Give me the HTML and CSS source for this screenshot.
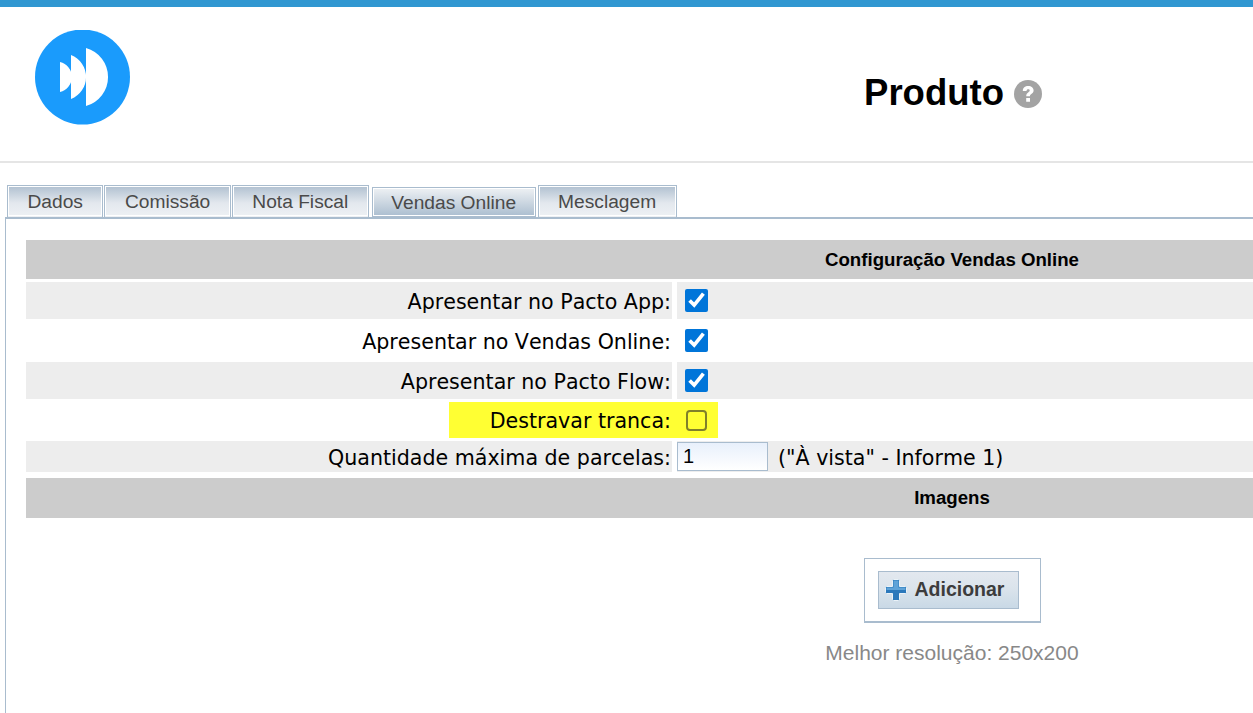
FILE: index.html
```html
<!DOCTYPE html>
<html lang="pt-BR">
<head>
<meta charset="utf-8">
<title>Produto</title>
<link rel="stylesheet" href="styles.css">
</head>
<body>
<div class="page">
  <header class="header">
    <svg class="logo" viewBox="0 0 95 95" width="95" height="95" aria-hidden="true">
      <circle cx="47.5" cy="47" r="47.5" fill="#1a9bfc"/>
      <path d="M25 32 A15.400 15.400 0 0 1 25 62 Z M36 25 A23.600 23.600 0 0 1 36 69 Z M51 18 A30.100 30.100 0 0 1 51 76 Z" fill="#fff"/>
    </svg>
    <div class="title">
      <h1>Produto</h1>
      <svg class="help" viewBox="0 0 28 28" width="28" height="28" aria-hidden="true">
        <circle cx="14" cy="14" r="14" fill="#a3a3a3"/>
        <path d="M8.800 11 C8.800 7.800 11 6 14.200 6 C17.400 6 19.600 7.900 19.600 10.500 C19.600 12.500 18.400 13.400 17 14.300 C16.200 14.800 16 15.300 16 16.200 H12.200 C12.200 14.300 12.800 13.300 14.200 12.400 C15.300 11.700 15.700 11.300 15.700 10.600 C15.700 9.800 15.100 9.300 14.200 9.300 C13.200 9.300 12.600 9.900 12.500 11 Z M12.200 18 H16 V21.800 H12.200 Z" fill="#fff"/>
      </svg>
    </div>
  </header>
  <nav class="tabs">
    <a class="tab">Dados</a>
    <a class="tab">Comissão</a>
    <a class="tab">Nota Fiscal</a>
    <a class="tab tab-active">Vendas Online</a>
    <a class="tab">Mesclagem</a>
  </nav>
  <main class="panel">
    <div class="section-head head-first">Configuração Vendas Online</div>
    <div class="form-row row-odd">
      <label class="row-label">Apresentar no Pacto App:</label>
      <div class="row-field"><input class="check" type="checkbox" checked></div>
    </div>
    <div class="form-row">
      <label class="row-label">Apresentar no Vendas Online:</label>
      <div class="row-field"><input class="check" type="checkbox" checked></div>
    </div>
    <div class="form-row row-odd">
      <label class="row-label">Apresentar no Pacto Flow:</label>
      <div class="row-field"><input class="check" type="checkbox" checked></div>
    </div>
    <div class="form-row row-mark">
      <div class="row-label"><span class="mark-left">Destravar tranca:</span></div>
      <div class="row-field"><span class="mark-right"><input class="check-plain" type="checkbox"></span></div>
    </div>
    <div class="form-row row-odd row-short">
      <label class="row-label">Quantidade máxima de parcelas:</label>
      <div class="row-field row-input">
        <input class="qty" type="text" value="1">
        <span class="qty-note">("À vista" - Informe 1)</span>
      </div>
    </div>
    <div class="section-head head-images">Imagens</div>
    <div class="upload">
      <div class="upload-box">
        <button class="add-btn" type="button">
          <svg class="plus" viewBox="0 0 24 24" width="24" height="24" aria-hidden="true">
            <path d="M8.500 2.500 Q8.500 1.500 9.500 1.500 H14.500 Q15.500 1.500 15.500 2.500 V8.500 H21.500 Q22.500 8.500 22.500 9.500 V14.500 Q22.500 15.500 21.500 15.500 H15.500 V21.500 Q15.500 22.500 14.500 22.500 H9.500 Q8.500 22.500 8.500 21.500 V15.500 H2.500 Q1.500 15.500 1.500 14.500 V9.500 Q1.500 8.500 2.500 8.500 H8.500 Z" fill="#2b78bb" stroke="#eaf2f8" stroke-width="1"/>
            <path d="M2.500 9.500 H21.500 V12 H15 V12 H2.500 Z M9.500 2.500 H14.500 V9.500 H9.500 Z" fill="#5fa3d8"/>
          </svg>
          Adicionar
        </button>
      </div>
      <p class="hint">Melhor resolução: 250x200</p>
    </div>
  </main>
</div>
</body>
</html>
```
FILE: styles.css
```css
html, body {
  margin: 0;
  padding: 0;
  height: 100%;
  background: #fff;
  overflow: hidden;
}
.page {
  width: 1906px;
  font-family: "Liberation Sans", Arial, sans-serif;
}
.header {
  display: flex;
  align-items: center;
  justify-content: center;
  position: relative;
  height: 154px;
  border-top: 7px solid #3097d1;
  border-bottom: 2px solid #e5e5e5;
}
.logo {
  position: absolute;
  left: 35px;
  top: 23px;
}
.title {
  display: flex;
  align-items: center;
  gap: 10px;
  margin-top: 18px;
}
.title h1 {
  margin: 0;
  font-size: 36.500px;
  line-height: 40px;
  font-weight: bold;
  color: #000;
}
.help {
  margin-top: 2px;
}
.tabs {
  display: flex;
  align-items: flex-end;
  gap: 1px;
  height: 32px;
  margin-top: 22px;
  padding-left: 7px;
}
.tab {
  box-sizing: border-box;
  height: 32px;
  padding: 1px 19.500px 0;
  border: 1px solid #a9bcce;
  border-bottom: 0;
  outline: 1px solid #fff;
  outline-offset: -2px;
  background: linear-gradient(#b0c0d0, #e3e8ee 55%, #eef1f4);
  color: #4a4a4a;
  font-size: 19.200px;
  line-height: 30px;
}
.tab-active {
  height: 30px;
  margin: 0 1px 0 2px;
  padding: 0 18.500px;
  background: linear-gradient(#eef1f4, #a9bcce);
}
.panel {
  box-sizing: border-box;
  margin-left: 5px;
  padding: 21px 28px 0 20px;
  border-top: 2px solid #a9bcce;
  border-left: 1px solid #a9bcce;
  height: 500px;
}
.section-head {
  background: #ccc;
  color: #000;
  font-size: 18.660px;
  font-weight: bold;
  text-align: center;
}
.head-first {
  height: 39px;
  line-height: 39px;
  margin-bottom: 3px;
}
.head-images {
  height: 40px;
  line-height: 39px;
  margin-top: 6px;
}
.form-row {
  display: grid;
  grid-template-columns: 646px 1fr;
  column-gap: 5px;
  height: 37px;
  margin-bottom: 3px;
  font-family: "DejaVu Sans", Verdana, sans-serif;
  font-size: 20.600px;
  font-kerning: none;
  color: #000;
}
.row-mark {
  height: 36px;
}
.row-short {
  height: 31px;
  margin-bottom: 0;
}
.row-label {
  display: flex;
  align-items: center;
  justify-content: flex-end;
  padding: 2px 1px 0 0;
}
.row-field {
  display: flex;
  align-items: center;
  padding-left: 8px;
}
.row-odd .row-label,
.row-odd .row-field {
  background: #ededed;
}
.row-input {
  padding-left: 0;
  gap: 10px;
}
.qty-note {
  padding-top: 2px;
}
.row-mark .row-label {
  padding: 0;
}
.row-mark .row-field {
  padding-left: 0;
}
.mark-left {
  box-sizing: border-box;
  display: flex;
  align-items: center;
  justify-content: flex-end;
  align-self: stretch;
  width: 228px;
  margin-right: -5px;
  padding: 2px 6px 0 0;
  background: #ffff33;
}
.mark-right {
  box-sizing: border-box;
  display: flex;
  align-items: center;
  align-self: stretch;
  width: 41px;
  padding-left: 9px;
  background: #ffff33;
}
.check {
  width: 23px;
  height: 23px;
  margin: 0;
  accent-color: #0075d9;
}
.check-plain {
  appearance: none;
  box-sizing: border-box;
  width: 21px;
  height: 21px;
  margin: 0;
  border: 2px solid #80802a;
  border-radius: 4px;
  background: transparent;
}
.qty {
  box-sizing: border-box;
  width: 91px;
  height: 29px;
  padding: 0 5px;
  border: 1px solid #a9bcce;
  background: linear-gradient(#e8f0fb, #fff);
  font-family: "Liberation Sans", Arial, sans-serif;
  font-size: 20px;
  color: #000;
}
.upload {
  display: flex;
  flex-direction: column;
  align-items: center;
  padding-top: 40px;
}
.upload-box {
  box-sizing: border-box;
  display: flex;
  align-items: center;
  justify-content: center;
  width: 177px;
  height: 65px;
  border: 1px solid #a9bcce;
  border-bottom-width: 2px;
}
.add-btn {
  box-sizing: border-box;
  display: flex;
  align-items: center;
  gap: 7px;
  width: 141px;
  height: 38px;
  padding: 0 0 0 5px;
  margin: -1px 8px 0 0;
  border: 1px solid #a9bcce;
  background: linear-gradient(#e3e8ef, #dbe4ec 45%, #c9d9e6);
  color: #3c3c3c;
  font-family: "Liberation Sans", Arial, sans-serif;
  font-size: 19.500px;
  font-weight: bold;
}
.plus {
  flex: none;
}
.hint {
  margin: 18px 0 0;
  font-size: 21px;
  line-height: 24px;
  color: #888;
}
```
